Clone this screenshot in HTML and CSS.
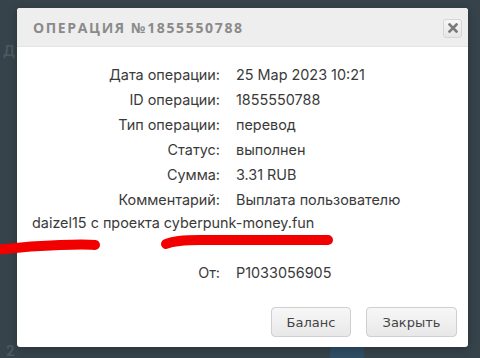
FILE: index.html
```html
<!DOCTYPE html>
<html lang="ru">
<head>
<meta charset="utf-8">
<link rel="stylesheet" href="styles.css">
</head>
<body>
<div class="backdrop">
  <span class="bg-text bg-top">Д</span>
  <span class="bg-text bg-bottom">2</span>
  <span class="bg-blob"></span>
</div>
<div class="dialog">
  <div class="dialog-header">
    <h1 class="dialog-title">Операция №1855550788</h1>
    <button class="close-btn" aria-label="close">
      <svg width="10" height="10" viewBox="0 0 10 10"><path d="M1.5 1.5 L8.5 8.5 M8.5 1.5 L1.5 8.5" stroke="#7a7a7a" stroke-width="2.6" stroke-linecap="square"/></svg>
    </button>
  </div>
  <div class="dialog-body">
    <div class="details">
      <span class="label">Дата операции:</span><span class="value">25 Мар 2023 10:21</span>
      <span class="label">ID операции:</span><span class="value">1855550788</span>
      <span class="label">Тип операции:</span><span class="value">перевод</span>
      <span class="label">Статус:</span><span class="value">выполнен</span>
      <span class="label">Сумма:</span><span class="value">3.31 RUB</span>
      <span class="label">Комментарий:</span><span class="value">Выплата пользователю</span>
      <span class="full">daizel15 с проекта cyberpunk-money.fun</span>
      <span class="spacer"></span>
      <span class="label">От:</span><span class="value">P1033056905</span>
    </div>
  </div>
  <div class="dialog-footer">
    <button class="btn btn-balance">Баланс</button>
    <button class="btn btn-close">Закрыть</button>
  </div>
</div>
<svg class="marks" width="480" height="358" viewBox="0 0 480 358">
  <path d="M-4 250 Q30 246 60 245 Q85 244 95 245" stroke="#f20000" stroke-width="10" fill="none" stroke-linecap="round"/>
  <path d="M166 244 Q175 240 200 240 L328 240" stroke="#f20000" stroke-width="10" fill="none" stroke-linecap="round"/>
</svg>
</body>
</html>
```

FILE: styles.css
```css
html, body {
  margin: 0;
  padding: 0;
}
body {
  width: 480px;
  height: 358px;
  background: #36434a;
  font-family: Inter, "Open Sans", "Liberation Sans", sans-serif;
  color: #3a3a3a;
  overflow: hidden;
  position: relative;
  padding: 8px 0 0 17px;
  box-sizing: border-box;
}
.backdrop {
  position: absolute;
  inset: 0;
}
.bg-text {
  position: absolute;
  color: #4c5a61;
  font-size: 14px;
  font-weight: 600;
}
.bg-top { left: 3px; top: 42px; }
.bg-bottom { left: 6px; top: 342px; }
.bg-blob {
  position: absolute;
  left: 330px;
  top: 346px;
  width: 34px;
  height: 14px;
  background: #2f4d63;
  border-radius: 4px 4px 0 0;
}
.dialog {
  position: relative;
  width: 451px;
  height: 339px;
  background: #fff;
  border-radius: 3px;
  display: flex;
  flex-direction: column;
  box-shadow: 0 2px 8px rgba(0,0,0,0.25);
}
.dialog-header {
  height: 39px;
  background: #eeeeee;
  border-radius: 3px 3px 0 0;
  border-bottom: 1px solid #e4e4e4;
  display: flex;
  align-items: center;
  justify-content: space-between;
  padding: 0 6px 0 16px;
  box-sizing: border-box;
}
.dialog-title {
  margin: 0;
  font-size: 14px;
  font-weight: 700;
  letter-spacing: 1.65px;
  text-transform: uppercase;
  color: #8a8a8a;
  font-family: "Open Sans", Inter, sans-serif;
}
.close-btn {
  width: 19px;
  height: 19px;
  margin-top: 2px;
  padding: 0;
  border: 1px solid #d6d6d6;
  border-radius: 3px;
  background: linear-gradient(#f6f6f6, #e6e6e6);
  display: flex;
  align-items: center;
  justify-content: center;
}
.dialog-body {
  flex: 1;
  padding: 15px 15px 0 15px;
}
.details {
  display: grid;
  grid-template-columns: 188px 1fr;
  column-gap: 16px;
  font-size: 14.4px;
  line-height: 25px;
}
.label {
  text-align: right;
}
.full {
  grid-column: 1 / -1;
  line-height: 22px;
}
.spacer {
  grid-column: 1 / -1;
  height: 26px;
}
.dialog-footer {
  display: flex;
  justify-content: flex-end;
  gap: 15px;
  padding: 0 11px 10px 0;
}
.btn {
  height: 30px;
  border: 1px solid #cfcfcf;
  border-radius: 4px;
  background: linear-gradient(#f7f7f7, #e8e8e8);
  font-family: "DejaVu Sans", Verdana, sans-serif;
  font-size: 13px;
  color: #444;
  padding: 0;
}
.btn-balance { width: 80px; }
.btn-close { width: 91px; }
.marks {
  position: absolute;
  left: 0;
  top: 0;
  pointer-events: none;
}
```
